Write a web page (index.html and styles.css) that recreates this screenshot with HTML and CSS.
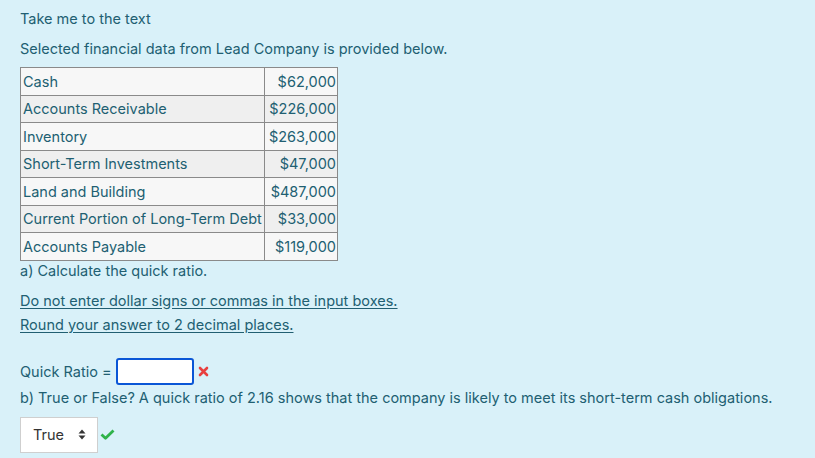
FILE: index.html
```html
<!DOCTYPE html>
<html>
<head>
<meta charset="utf-8">
<link rel="stylesheet" href="styles.css">
</head>
<body>
<div class="page">
  <p class="skip">Take me to the text</p>
  <p class="intro">Selected financial data from Lead Company is provided below.</p>
  <table class="data">
    <tr><td class="label">Cash</td><td class="num">$62,000</td></tr>
    <tr><td class="label">Accounts Receivable</td><td class="num">$226,000</td></tr>
    <tr><td class="label">Inventory</td><td class="num">$263,000</td></tr>
    <tr><td class="label">Short-Term Investments</td><td class="num">$47,000</td></tr>
    <tr><td class="label">Land and Building</td><td class="num">$487,000</td></tr>
    <tr><td class="label">Current Portion of Long-Term Debt</td><td class="num">$33,000</td></tr>
    <tr><td class="label">Accounts Payable</td><td class="num">$119,000</td></tr>
  </table>
  <p class="qa">a) Calculate the quick ratio.</p>
  <p class="note first"><span class="u">Do not enter dollar signs or commas in the input boxes.</span></p>
  <p class="note"><span class="u">Round your answer to 2 decimal places.</span></p>
  <div class="answer">
    <span>Quick Ratio =</span>
    <span class="input"></span>
    <svg class="mark" width="11" height="11" viewBox="0 0 11 11"><path d="M2 2 L9 9 M9 2 L2 9" stroke="#e8403f" stroke-width="2.6" stroke-linecap="round"/></svg>
  </div>
  <p class="qb">b) True or False? A quick ratio of 2.16 shows that the company is likely to meet its short-term cash obligations.</p>
  <div class="pick">
    <div class="select"><span>True</span>
      <svg width="8" height="11" viewBox="0 0 8 11"><path d="M4 0.5 L7.5 4.5 H0.5 Z M4 10.5 L7.5 6.5 H0.5 Z" fill="#333"/></svg>
    </div>
    <svg class="check" width="15" height="11" viewBox="0 0 15 11"><path d="M1.5 5.5 L5.5 9.3 L13.5 1.5" fill="none" stroke="#2fb34a" stroke-width="2.8" stroke-linejoin="round"/></svg>
  </div>
</div>
</body>
</html>
```
FILE: styles.css
```css
html, body {
  margin: 0;
  padding: 0;
  background: #d9f1f9;
}
.page {
  padding: 9px 20px 0 20px;
  font-family: Inter, "Liberation Sans", Arial, sans-serif;
  font-size: 14.5px;
  color: #215f72;
}
p { margin: 0; }
.skip { line-height: 20px; }
.intro { margin-top: 10px; line-height: 20px; }
.data {
  margin-top: 8px;
  border-collapse: collapse;
}
.data td {
  border: 1px solid #8a8a8a;
  height: 25.5px;
  padding: 1px 1px 0 2px;
  line-height: 18px;
  white-space: nowrap;
}
.data tr:nth-child(odd) td { background: #f7f7f7; }
.data tr:nth-child(even) td { background: #efefef; }
.data td.label { width: 240px; }
.data td.num { text-align: right; width: 69px; }
.qa { line-height: 20px; margin-top: 0; }
.note { line-height: 24px; }
.note.first { margin-top: 8px; }
.u { text-decoration: underline; text-underline-offset: 2px; }
.answer {
  margin-top: 21px;
  display: flex;
  align-items: center;
  gap: 4px;
  height: 28px;
}
.input {
  box-sizing: border-box;
  width: 78px;
  height: 27px;
  border: 2px solid #0a56d6;
  border-radius: 3px;
  background: #fff;
}
.qb { line-height: 20px; margin-top: 2px; }
.pick {
  margin-top: 9px;
  display: flex;
  align-items: center;
  gap: 2px;
}
.select {
  box-sizing: border-box;
  width: 78px;
  height: 36px;
  background: #fff;
  border: 1px solid #cfcfcf;
  display: flex;
  align-items: center;
  gap: 14px;
  padding-left: 12px;
  color: #333;
}
```
